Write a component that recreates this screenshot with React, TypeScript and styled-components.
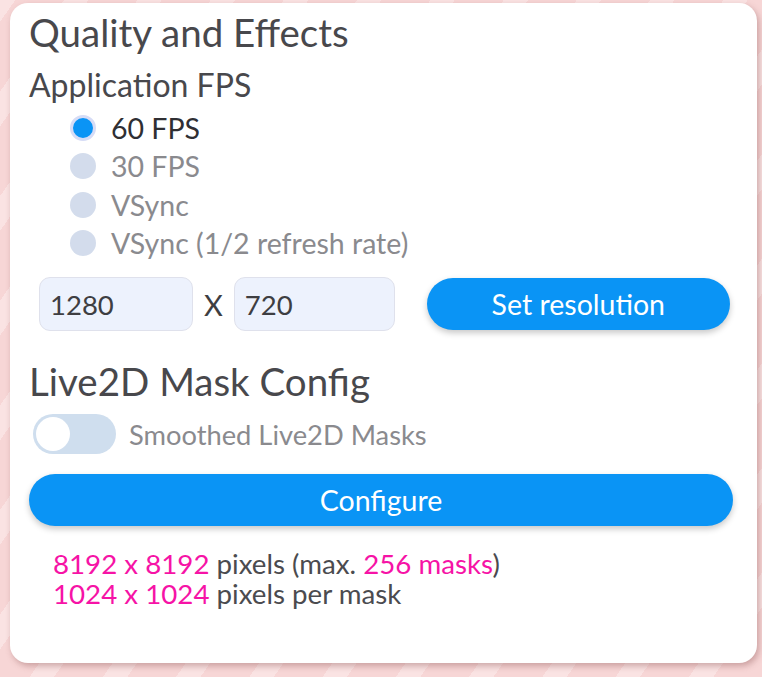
import React from "react";
import styled, { createGlobalStyle } from "styled-components";

const Global = createGlobalStyle`
  html, body { margin: 0; padding: 0; }
  body {
    width: 762px;
    height: 677px;
    overflow: hidden;
    font-family: "Lato", "Noto Sans", sans-serif;
    background-color: #f8d9d9;
    background-image: repeating-linear-gradient(
      -55deg,
      #f7d6d6 0px,
      #f7d6d6 40px,
      #fae3e3 40px,
      #fae3e3 60px
    );
  }
`;

const Page = styled.div`
  padding: 3px 5px 14px 10px;
`;

const Card = styled.div`
  background: #ffffff;
  border-radius: 18px;
  height: 660px;
  box-sizing: border-box;
  padding: 4px 24px 0 19px;
  box-shadow: 2px 3px 6px rgba(120, 60, 60, 0.35);
  display: flex;
  flex-direction: column;
  color: #4b4b4f;
`;

const Title = styled.h2`
  margin: 0;
  font-size: 38.5px;
  font-weight: 400;
  line-height: 50px;
  color: #48484c;
`;

const SubTitle = styled.h3`
  margin: 8px 0 0 0;
  font-size: 32px;
  font-weight: 400;
  line-height: 40px;
  color: #48484c;
`;

const RadioList = styled.div`
  display: flex;
  flex-direction: column;
  padding-left: 41px;
  margin-top: 4px;
`;

const RadioRow = styled.label`
  display: flex;
  align-items: center;
  gap: 15px;
  height: 38.3px;
`;

const RadioDot = styled.span<{ $on?: boolean }>`
  width: 26px;
  height: 26px;
  border-radius: 50%;
  box-sizing: border-box;
  background: ${(p) => (p.$on ? "#0a94f5" : "#d3dcec")};
  border: ${(p) => (p.$on ? "3px solid #d6dcf6" : "none")};
  flex: none;
`;

const RadioText = styled.span<{ $on?: boolean }>`
  font-size: 28.5px;
  color: ${(p) => (p.$on ? "#2f2f33" : "#8a8a8e")};
`;

const ResRow = styled.div`
  display: flex;
  align-items: center;
  margin-top: 15px;
  padding-left: 10px;
`;

const NumInput = styled.div<{ $w: number }>`
  width: ${(p) => p.$w}px;
  height: 54px;
  box-sizing: border-box;
  border: 1.5px solid #dfe1ec;
  border-radius: 11px;
  background: #edf2fd;
  display: flex;
  align-items: center;
  padding-left: 10px;
  font-size: 27.5px;
  color: #3e3e42;
`;

const Times = styled.span`
  font-size: 29px;
  color: #3e3e42;
  margin: 0 11px 0 11px;
`;

const PillButton = styled.button<{ $w?: string }>`
  width: ${(p) => p.$w || "auto"};
  height: 52px;
  border: none;
  border-radius: 26px;
  background: #0a94f5;
  color: #ffffff;
  font-family: inherit;
  font-size: 28.5px;
  box-shadow: 0 3px 6px rgba(0, 0, 0, 0.22);
  padding: 0;
`;

const ResButton = styled(PillButton)`
  margin-left: 32px;
`;

const SectionTitle = styled(Title)`
  margin-top: 25px;
`;

const ToggleRow = styled.div`
  display: flex;
  align-items: center;
  gap: 13px;
  margin-top: 8px;
  padding-left: 4px;
`;

const Toggle = styled.span`
  width: 83px;
  height: 40px;
  border-radius: 20px;
  background: #cfdeee;
  position: relative;
  flex: none;
`;

const Knob = styled.span`
  position: absolute;
  left: 3px;
  top: 3px;
  width: 34px;
  height: 34px;
  border-radius: 50%;
  background: #ffffff;
`;

const ToggleLabel = styled.span`
  font-size: 27.3px;
  color: #8a8a8e;
`;

const ConfigureButton = styled(PillButton)`
  margin-top: 20px;
  width: 100%;
`;

const Info = styled.div`
  margin-top: 23px;
  padding-left: 24px;
  font-size: 27.7px;
  line-height: 30px;
  color: #4b4b4f;
`;

const Hi = styled.span`
  color: #f613a6;
`;

export default function App() {
  const options = ["60 FPS", "30 FPS", "VSync", "VSync (1/2 refresh rate)"];
  return (
    <>
      <Global />
      <Page>
        <Card>
          <Title>Quality and Effects</Title>
          <SubTitle>Application FPS</SubTitle>
          <RadioList>
            {options.map((o, i) => (
              <RadioRow key={o}>
                <RadioDot $on={i === 0} />
                <RadioText $on={i === 0}>{o}</RadioText>
              </RadioRow>
            ))}
          </RadioList>
          <ResRow>
            <NumInput $w={154}>1280</NumInput>
            <Times>X</Times>
            <NumInput $w={161}>720</NumInput>
            <ResButton $w="303px">Set resolution</ResButton>
          </ResRow>
          <SectionTitle>Live2D Mask Config</SectionTitle>
          <ToggleRow>
            <Toggle>
              <Knob />
            </Toggle>
            <ToggleLabel>Smoothed Live2D Masks</ToggleLabel>
          </ToggleRow>
          <ConfigureButton>Configure</ConfigureButton>
          <Info>
            <div>
              <Hi>8192 x 8192</Hi> pixels (max. <Hi>256 masks</Hi>)
            </div>
            <div>
              <Hi>1024 x 1024</Hi> pixels per mask
            </div>
          </Info>
        </Card>
      </Page>
    </>
  );
}
